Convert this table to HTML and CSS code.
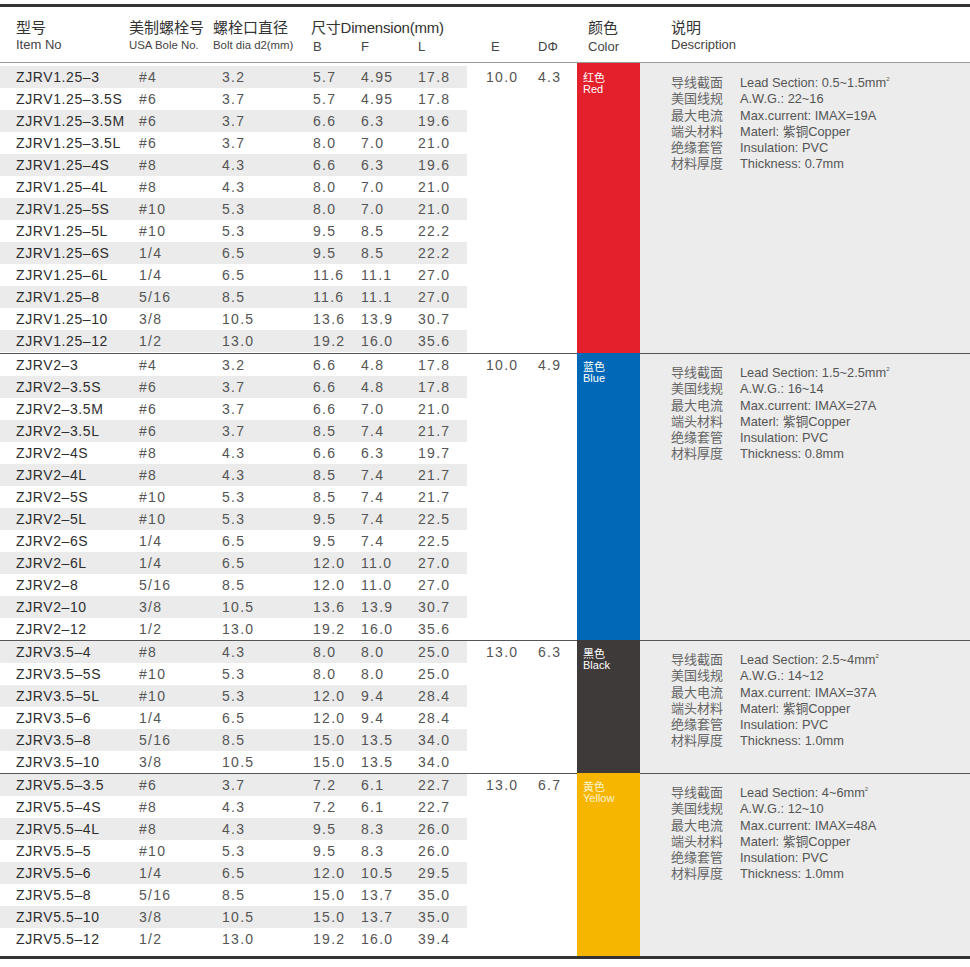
FILE: index.html
```html
<!DOCTYPE html>
<html lang="zh">
<head>
<meta charset="utf-8">
<title>ZJRV</title>
<link rel="stylesheet" href="styles.css">
</head>
<body>
<div class="sheet">
  <div class="head">
    <div class="hc h1"><div class="cn">型号</div><div class="en">Item No</div></div>
    <div class="hc h2"><div class="cn">美制螺栓号</div><div class="en sm">USA Bole No.</div></div>
    <div class="hc h3"><div class="cn">螺栓口直径</div><div class="en sm">Bolt dia d2(mm)</div></div>
    <div class="hc h4"><div class="cn dimt">尺寸Dimension(mm)</div><div class="en bfl"><span>B</span><span>F</span><span>L</span></div></div>
    <div class="hc h5"><div class="cn">&nbsp;</div><div class="en low">E</div></div>
    <div class="hc h6"><div class="cn">&nbsp;</div><div class="en low">DΦ</div></div>
    <div class="hc h7"><div class="cn">颜色</div><div class="en low">Color</div></div>
    <div class="hc h8"><div class="cn">说明</div><div class="en">Description</div></div>
  </div>

  <div class="group g1">
    <div class="rows">
      <div class="row s"><span class="c1">ZJRV1.25–3</span><span class="c2">#4</span><span class="c3">3.2</span><span class="c4">5.7</span><span class="c5">4.95</span><span class="c6">17.8</span></div>
      <div class="row"><span class="c1">ZJRV1.25–3.5S</span><span class="c2">#6</span><span class="c3">3.7</span><span class="c4">5.7</span><span class="c5">4.95</span><span class="c6">17.8</span></div>
      <div class="row s"><span class="c1">ZJRV1.25–3.5M</span><span class="c2">#6</span><span class="c3">3.7</span><span class="c4">6.6</span><span class="c5">6.3</span><span class="c6">19.6</span></div>
      <div class="row"><span class="c1">ZJRV1.25–3.5L</span><span class="c2">#6</span><span class="c3">3.7</span><span class="c4">8.0</span><span class="c5">7.0</span><span class="c6">21.0</span></div>
      <div class="row s"><span class="c1">ZJRV1.25–4S</span><span class="c2">#8</span><span class="c3">4.3</span><span class="c4">6.6</span><span class="c5">6.3</span><span class="c6">19.6</span></div>
      <div class="row"><span class="c1">ZJRV1.25–4L</span><span class="c2">#8</span><span class="c3">4.3</span><span class="c4">8.0</span><span class="c5">7.0</span><span class="c6">21.0</span></div>
      <div class="row s"><span class="c1">ZJRV1.25–5S</span><span class="c2">#10</span><span class="c3">5.3</span><span class="c4">8.0</span><span class="c5">7.0</span><span class="c6">21.0</span></div>
      <div class="row"><span class="c1">ZJRV1.25–5L</span><span class="c2">#10</span><span class="c3">5.3</span><span class="c4">9.5</span><span class="c5">8.5</span><span class="c6">22.2</span></div>
      <div class="row s"><span class="c1">ZJRV1.25–6S</span><span class="c2">1/4</span><span class="c3">6.5</span><span class="c4">9.5</span><span class="c5">8.5</span><span class="c6">22.2</span></div>
      <div class="row"><span class="c1">ZJRV1.25–6L</span><span class="c2">1/4</span><span class="c3">6.5</span><span class="c4">11.6</span><span class="c5">11.1</span><span class="c6">27.0</span></div>
      <div class="row s"><span class="c1">ZJRV1.25–8</span><span class="c2">5/16</span><span class="c3">8.5</span><span class="c4">11.6</span><span class="c5">11.1</span><span class="c6">27.0</span></div>
      <div class="row"><span class="c1">ZJRV1.25–10</span><span class="c2">3/8</span><span class="c3">10.5</span><span class="c4">13.6</span><span class="c5">13.9</span><span class="c6">30.7</span></div>
      <div class="row s"><span class="c1">ZJRV1.25–12</span><span class="c2">1/2</span><span class="c3">13.0</span><span class="c4">19.2</span><span class="c5">16.0</span><span class="c6">35.6</span></div>
    </div>
    <div class="e">10.0</div>
    <div class="d">4.3</div>
    <div class="sw red"><div>红色</div><div>Red</div></div>
    <div class="desc">
      <div class="dl">
        <span class="k">导线截面</span><span class="v">Lead Section: 0.5~1.5mm<sup class="sq">2</sup></span>
        <span class="k">美国线规</span><span class="v">A.W.G.: 22~16</span>
        <span class="k">最大电流</span><span class="v">Max.current: IMAX=19A</span>
        <span class="k">端头材料</span><span class="v">Materl: 紫铜Copper</span>
        <span class="k">绝缘套管</span><span class="v">Insulation: PVC</span>
        <span class="k">材料厚度</span><span class="v">Thickness: 0.7mm</span>
      </div>
    </div>
  </div>

  <div class="group g2">
    <div class="rows">
      <div class="row"><span class="c1">ZJRV2–3</span><span class="c2">#4</span><span class="c3">3.2</span><span class="c4">6.6</span><span class="c5">4.8</span><span class="c6">17.8</span></div>
      <div class="row s"><span class="c1">ZJRV2–3.5S</span><span class="c2">#6</span><span class="c3">3.7</span><span class="c4">6.6</span><span class="c5">4.8</span><span class="c6">17.8</span></div>
      <div class="row"><span class="c1">ZJRV2–3.5M</span><span class="c2">#6</span><span class="c3">3.7</span><span class="c4">6.6</span><span class="c5">7.0</span><span class="c6">21.0</span></div>
      <div class="row s"><span class="c1">ZJRV2–3.5L</span><span class="c2">#6</span><span class="c3">3.7</span><span class="c4">8.5</span><span class="c5">7.4</span><span class="c6">21.7</span></div>
      <div class="row"><span class="c1">ZJRV2–4S</span><span class="c2">#8</span><span class="c3">4.3</span><span class="c4">6.6</span><span class="c5">6.3</span><span class="c6">19.7</span></div>
      <div class="row s"><span class="c1">ZJRV2–4L</span><span class="c2">#8</span><span class="c3">4.3</span><span class="c4">8.5</span><span class="c5">7.4</span><span class="c6">21.7</span></div>
      <div class="row"><span class="c1">ZJRV2–5S</span><span class="c2">#10</span><span class="c3">5.3</span><span class="c4">8.5</span><span class="c5">7.4</span><span class="c6">21.7</span></div>
      <div class="row s"><span class="c1">ZJRV2–5L</span><span class="c2">#10</span><span class="c3">5.3</span><span class="c4">9.5</span><span class="c5">7.4</span><span class="c6">22.5</span></div>
      <div class="row"><span class="c1">ZJRV2–6S</span><span class="c2">1/4</span><span class="c3">6.5</span><span class="c4">9.5</span><span class="c5">7.4</span><span class="c6">22.5</span></div>
      <div class="row s"><span class="c1">ZJRV2–6L</span><span class="c2">1/4</span><span class="c3">6.5</span><span class="c4">12.0</span><span class="c5">11.0</span><span class="c6">27.0</span></div>
      <div class="row"><span class="c1">ZJRV2–8</span><span class="c2">5/16</span><span class="c3">8.5</span><span class="c4">12.0</span><span class="c5">11.0</span><span class="c6">27.0</span></div>
      <div class="row s"><span class="c1">ZJRV2–10</span><span class="c2">3/8</span><span class="c3">10.5</span><span class="c4">13.6</span><span class="c5">13.9</span><span class="c6">30.7</span></div>
      <div class="row"><span class="c1">ZJRV2–12</span><span class="c2">1/2</span><span class="c3">13.0</span><span class="c4">19.2</span><span class="c5">16.0</span><span class="c6">35.6</span></div>
    </div>
    <div class="e">10.0</div>
    <div class="d">4.9</div>
    <div class="sw blue"><div>蓝色</div><div>Blue</div></div>
    <div class="desc">
      <div class="dl">
        <span class="k">导线截面</span><span class="v">Lead Section: 1.5~2.5mm<sup class="sq">2</sup></span>
        <span class="k">美国线规</span><span class="v">A.W.G.: 16~14</span>
        <span class="k">最大电流</span><span class="v">Max.current: IMAX=27A</span>
        <span class="k">端头材料</span><span class="v">Materl: 紫铜Copper</span>
        <span class="k">绝缘套管</span><span class="v">Insulation: PVC</span>
        <span class="k">材料厚度</span><span class="v">Thickness: 0.8mm</span>
      </div>
    </div>
  </div>

  <div class="group g3">
    <div class="rows">
      <div class="row s"><span class="c1">ZJRV3.5–4</span><span class="c2">#8</span><span class="c3">4.3</span><span class="c4">8.0</span><span class="c5">8.0</span><span class="c6">25.0</span></div>
      <div class="row"><span class="c1">ZJRV3.5–5S</span><span class="c2">#10</span><span class="c3">5.3</span><span class="c4">8.0</span><span class="c5">8.0</span><span class="c6">25.0</span></div>
      <div class="row s"><span class="c1">ZJRV3.5–5L</span><span class="c2">#10</span><span class="c3">5.3</span><span class="c4">12.0</span><span class="c5">9.4</span><span class="c6">28.4</span></div>
      <div class="row"><span class="c1">ZJRV3.5–6</span><span class="c2">1/4</span><span class="c3">6.5</span><span class="c4">12.0</span><span class="c5">9.4</span><span class="c6">28.4</span></div>
      <div class="row s"><span class="c1">ZJRV3.5–8</span><span class="c2">5/16</span><span class="c3">8.5</span><span class="c4">15.0</span><span class="c5">13.5</span><span class="c6">34.0</span></div>
      <div class="row"><span class="c1">ZJRV3.5–10</span><span class="c2">3/8</span><span class="c3">10.5</span><span class="c4">15.0</span><span class="c5">13.5</span><span class="c6">34.0</span></div>
    </div>
    <div class="e">13.0</div>
    <div class="d">6.3</div>
    <div class="sw black"><div>黑色</div><div>Black</div></div>
    <div class="desc">
      <div class="dl">
        <span class="k">导线截面</span><span class="v">Lead Section: 2.5~4mm<sup class="sq">2</sup></span>
        <span class="k">美国线规</span><span class="v">A.W.G.: 14~12</span>
        <span class="k">最大电流</span><span class="v">Max.current: IMAX=37A</span>
        <span class="k">端头材料</span><span class="v">Materl: 紫铜Copper</span>
        <span class="k">绝缘套管</span><span class="v">Insulation: PVC</span>
        <span class="k">材料厚度</span><span class="v">Thickness: 1.0mm</span>
      </div>
    </div>
  </div>

  <div class="group g4">
    <div class="rows">
      <div class="row s"><span class="c1">ZJRV5.5–3.5</span><span class="c2">#6</span><span class="c3">3.7</span><span class="c4">7.2</span><span class="c5">6.1</span><span class="c6">22.7</span></div>
      <div class="row"><span class="c1">ZJRV5.5–4S</span><span class="c2">#8</span><span class="c3">4.3</span><span class="c4">7.2</span><span class="c5">6.1</span><span class="c6">22.7</span></div>
      <div class="row s"><span class="c1">ZJRV5.5–4L</span><span class="c2">#8</span><span class="c3">4.3</span><span class="c4">9.5</span><span class="c5">8.3</span><span class="c6">26.0</span></div>
      <div class="row"><span class="c1">ZJRV5.5–5</span><span class="c2">#10</span><span class="c3">5.3</span><span class="c4">9.5</span><span class="c5">8.3</span><span class="c6">26.0</span></div>
      <div class="row s"><span class="c1">ZJRV5.5–6</span><span class="c2">1/4</span><span class="c3">6.5</span><span class="c4">12.0</span><span class="c5">10.5</span><span class="c6">29.5</span></div>
      <div class="row"><span class="c1">ZJRV5.5–8</span><span class="c2">5/16</span><span class="c3">8.5</span><span class="c4">15.0</span><span class="c5">13.7</span><span class="c6">35.0</span></div>
      <div class="row s"><span class="c1">ZJRV5.5–10</span><span class="c2">3/8</span><span class="c3">10.5</span><span class="c4">15.0</span><span class="c5">13.7</span><span class="c6">35.0</span></div>
      <div class="row"><span class="c1">ZJRV5.5–12</span><span class="c2">1/2</span><span class="c3">13.0</span><span class="c4">19.2</span><span class="c5">16.0</span><span class="c6">39.4</span></div>
    </div>
    <div class="e">13.0</div>
    <div class="d">6.7</div>
    <div class="sw yellow"><div>黄色</div><div>Yellow</div></div>
    <div class="desc">
      <div class="dl">
        <span class="k">导线截面</span><span class="v">Lead Section: 4~6mm<sup class="sq">2</sup></span>
        <span class="k">美国线规</span><span class="v">A.W.G.: 12~10</span>
        <span class="k">最大电流</span><span class="v">Max.current: IMAX=48A</span>
        <span class="k">端头材料</span><span class="v">Materl: 紫铜Copper</span>
        <span class="k">绝缘套管</span><span class="v">Insulation: PVC</span>
        <span class="k">材料厚度</span><span class="v">Thickness: 1.0mm</span>
      </div>
    </div>
  </div>
</div>
</body>
</html>
```

FILE: styles.css
```css
html, body {
  margin: 0;
  padding: 0;
  background: #fff;
}
body {
  font-family: "Liberation Sans", "Noto Sans CJK SC", sans-serif;
  color: #444;
}
.sheet {
  width: 970px;
  margin-top: 4px;
  border-top: 3px solid #333;
  border-bottom: 3px solid #333;
}

/* header */
.head {
  display: grid;
  grid-template-columns: 125px 84px 96px 162px 63px 47px 63px 1fr;
  height: 55px;
  border-bottom: 1px solid #9a9a9a;
}
.hc {
  padding-top: 12px;
  box-sizing: border-box;
  white-space: nowrap;
}
.cn {
  font-size: 15px;
  line-height: 17px;
  color: #333;
}
.en {
  font-size: 13px;
  line-height: 16px;
  color: #444;
  padding-top: 1px;
}
.en.sm {
  font-size: 11.4px;
  padding-top: 1px;
}
.en.low {
  padding-top: 3px;
}
.h1 { padding-left: 16px; }
.h2 { padding-left: 4px; }
.h3 { padding-left: 4px; }
.dimt { padding-left: 6px; letter-spacing: -0.2px; }
.bfl {
  display: grid;
  grid-template-columns: 48px 57px 57px;
  padding-top: 3px;
}
.bfl span { padding-left: 8px; }
.h5 { padding-left: 24px; }
.h6 { padding-left: 8px; }
.h7 { padding-left: 11px; }
.h8 { padding-left: 31px; }

/* groups */
.group {
  display: flex;
}
.group + .group {
  border-top: 1px solid #555;
}
.rows {
  width: 467px;
  flex: none;
}
.g1 .rows { padding-top: 3px; padding-bottom: 1px; }
.g4 .rows { padding-bottom: 6px; }

.row {
  display: grid;
  grid-template-columns: 125px 84px 96px 48px 57px 57px;
  height: 22px;
  line-height: 22px;
  font-size: 14px;
  white-space: nowrap;
}
.row.s { background: #ebebeb; }
.c1 {
  padding-left: 16px;
  color: #2e2e2e;
  letter-spacing: 0.6px;
}
.c2, .c3, .c4, .c5, .c6 {
  color: #555;
  letter-spacing: 1.3px;
}
.c2 { padding-left: 14px; }
.c3 { padding-left: 13px; }
.c4, .c5, .c6 { padding-left: 8px; }

.e, .d {
  flex: none;
  box-sizing: border-box;
  font-size: 14px;
  line-height: 22px;
  color: #555;
  letter-spacing: 1.3px;
}
.e { width: 63px; padding-left: 19px; }
.d { width: 47px; padding-left: 8px; }
.g1 .e, .g1 .d { padding-top: 3px; }

.sw {
  flex: none;
  width: 63px;
  box-sizing: border-box;
  padding: 9px 0 0 6px;
  font-size: 11px;
  line-height: 10.5px;
  color: #fff;
}
.g1 .sw { padding-top: 10px; }
.group + .group .sw { margin-top: -1px; padding-top: 9px; }
.red { background: #e3202b; }
.blue { background: #0068b6; }
.black { background: #3e3a39; }
.yellow { background: #f6b600; color: #fdf3d0; }

.desc {
  flex: 1;
  background: #ececec;
  padding: 11px 0 0 31px;
}
.g1 .desc { padding-top: 12px; }
.dl {
  display: grid;
  grid-template-columns: 69px auto;
  line-height: 16.3px;
  color: #555;
}
.k { font-size: 13px; color: #666; }
.v { font-size: 12.8px; color: #555; }
.sq {
  font-size: 6px;
  vertical-align: 6px;
  line-height: 0;
}
```
